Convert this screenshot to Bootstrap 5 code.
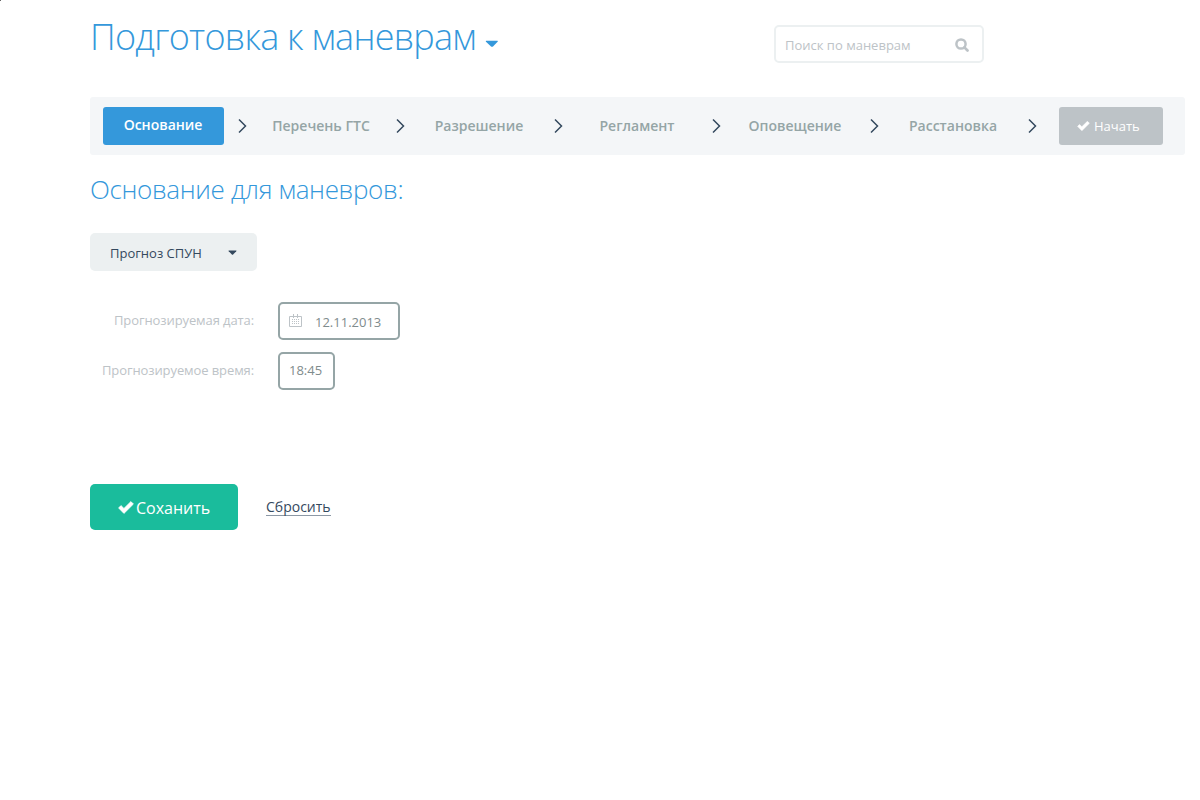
<!DOCTYPE html>
<html lang="ru">
<head>
<meta charset="utf-8">
<meta name="viewport" content="width=device-width, initial-scale=1">
<title>Подготовка к маневрам</title>
<link href="https://cdn.jsdelivr.net/npm/bootstrap@5.3.0/dist/css/bootstrap.min.css" rel="stylesheet">
<style>
body{font-family:"Open Sans","Noto Sans",sans-serif;font-size:13px;line-height:20px;color:#34495e;background:#fff;min-height:800px}
svg{display:block;flex:none}
.page{width:1095px;margin-left:90px;padding-top:12px}
.corner{top:0;left:0;width:1px;height:1px;background:#666}
.top{height:84.5px}
.title{font-size:36px;font-weight:300;letter-spacing:-.74px;line-height:50px;color:#3498db;margin:0;white-space:nowrap}
.caret-big{margin:27.5px 0 0 9px}
.search{width:210px;height:38px;margin:13px 201px 0 auto;border:2px solid #ecf0f1;border-radius:5px;padding:2px 13px 0 9px;color:#bdc3c7}
.search input{font-size:13px;line-height:20px;color:#bdc3c7;width:150px}
.search input::placeholder{color:#bdc3c7;opacity:1}
.steps{height:58px;background:#f4f6f8;border-radius:3px;padding-left:2px}
.step{width:142px;text-align:center;font-size:14px;font-weight:600;color:#95a5a6;white-space:nowrap}
.step-on{width:121px;height:38px;line-height:36px;margin:0 auto;background:#3498db;color:#fff;border-radius:3px}
.start{width:104px;height:38px;margin-left:19px;background:#bdc3c7;color:#fff;border-radius:3px;padding:1px 0 0 18px;font-size:13px;border:0}
.subtitle{font-size:26px;font-weight:300;letter-spacing:-.34px;line-height:36px;color:#3498db;margin:16.5px 0 0;white-space:nowrap}
.source{width:167px;height:38px;margin-top:26px;background:#ecf0f1;color:#34495e;border:0;border-radius:5px;padding:2px 20px 0 20px;font-size:13px}
.fields{margin-top:30.5px;gap:12px}
.caption{width:164px;margin:-2px 24px 0 0;text-align:right;letter-spacing:-.1px;color:#bdc3c7;white-space:nowrap}
.field{height:38px;border:2px solid #95a5a6;border-radius:5px;color:#7f8c8d;padding:0 9px}
.date{width:122px}
.date-text{margin:2px 0 0 12px}
.time{width:57px;padding-bottom:2px}
.actions{margin-top:94px}
.save{width:148px;height:46px;background:#1abc9c;color:#fff;border:0;border-radius:5px;font-size:16px;padding:2px 0 0 28px}
.save span{margin-left:2px}
.reset{font-size:14px;line-height:17px;color:#34495e;text-decoration:none;border-bottom:1px solid #8c98a5;margin-left:28px}
</style>
</head>
<body>
<i class="corner position-absolute"></i>
<svg width="0" height="0" class="position-absolute" aria-hidden="true">
<symbol id="next" viewBox="0 0 16 16"><path d="M5 1.5 11.5 8 5 14.5" fill="none" stroke="#34495e" stroke-width="1.5"/></symbol>
<symbol id="check" viewBox="0 0 14 11"><path d="M.5 5.9 2.6 3.8 5.2 6.3 11.3.3 13.5 2.5 5.2 10.7Z" fill="#fff" stroke="#fff" stroke-width=".6" stroke-linejoin="round"/></symbol>
</svg>
<main class="page">
  <header class="top d-flex align-items-start">
    <h1 class="title">Подготовка к маневрам</h1>
    <svg class="caret-big" width="14" height="8" viewBox="0 0 14 8"><path d="M1.3.8H12.4Q13.2 1 12.6 1.8L8 6.5Q7 7.2 6 6.5L1 1.8Q.4 1 1.3.8" fill="#3498db"/></svg>
    <form class="search d-flex align-items-center justify-content-between">
      <input class="border-0 p-0 bg-transparent" placeholder="Поиск по маневрам" aria-label="Поиск">
      <svg width="14" height="14" viewBox="0 0 14 14" fill="none" stroke="#bdc3c7" stroke-width="2.5"><circle cx="6" cy="6" r="4.6"/><path d="m9.4 9.4 3.1 3.1" stroke-width="2.7" stroke-linecap="round"/></svg>
    </form>
  </header>
  <nav class="steps d-flex align-items-center">
    <div class="step"><div class="step-on">Основание</div></div><svg width="16" height="16"><use href="#next"/></svg>
    <div class="step">Перечень ГТС</div><svg width="16" height="16"><use href="#next"/></svg>
    <div class="step">Разрешение</div><svg width="16" height="16"><use href="#next"/></svg>
    <div class="step">Регламент</div><svg width="16" height="16"><use href="#next"/></svg>
    <div class="step">Оповещение</div><svg width="16" height="16"><use href="#next"/></svg>
    <div class="step">Расстановка</div><svg width="16" height="16"><use href="#next"/></svg>
    <button class="start d-flex align-items-center"><svg width="13" height="10" class="me-1"><use href="#check"/></svg>Начать</button>
  </nav>
  <h2 class="subtitle">Основание для маневров:</h2>
  <button class="source d-flex align-items-center justify-content-between">Прогноз СПУН
    <svg width="9" height="6" viewBox="0 0 9 6"><path d="M.8.5H8.2Q8.8.7 8.3 1.3L5.1 4.6Q4.5 5.1 3.9 4.6L.7 1.3Q.2.7.8.5" fill="#34495e"/></svg>
  </button>
  <div class="fields d-flex flex-column">
    <div class="d-flex align-items-center"><div class="caption">Прогнозируемая дата:</div>
      <div class="field date d-flex align-items-center"><svg width="14" height="14" viewBox="0 0 14 14" fill="none" stroke="#bdc3c7"><path d="M.5 2.5H12.5V12.5H.5ZM4.5 0V4M8.5 0V4"/><path d="M3.5 5V11M5.5 5V11M7.5 5V11M9.5 5V11" stroke-dasharray="1 1"/></svg><span class="date-text">12.11.2013</span></div>
    </div>
    <div class="d-flex align-items-center"><div class="caption">Прогнозируемое время:</div>
      <div class="field time d-flex align-items-center">18:45</div>
    </div>
  </div>
  <div class="actions d-flex align-items-center">
    <button class="save d-flex align-items-center"><svg width="16" height="13"><use href="#check"/></svg><span>Соханить</span></button>
    <a class="reset" href="#">Сбросить</a>
  </div>
</main>
<script src="https://cdn.jsdelivr.net/npm/bootstrap@5.3.0/dist/js/bootstrap.bundle.min.js"></script>
</body>
</html>
